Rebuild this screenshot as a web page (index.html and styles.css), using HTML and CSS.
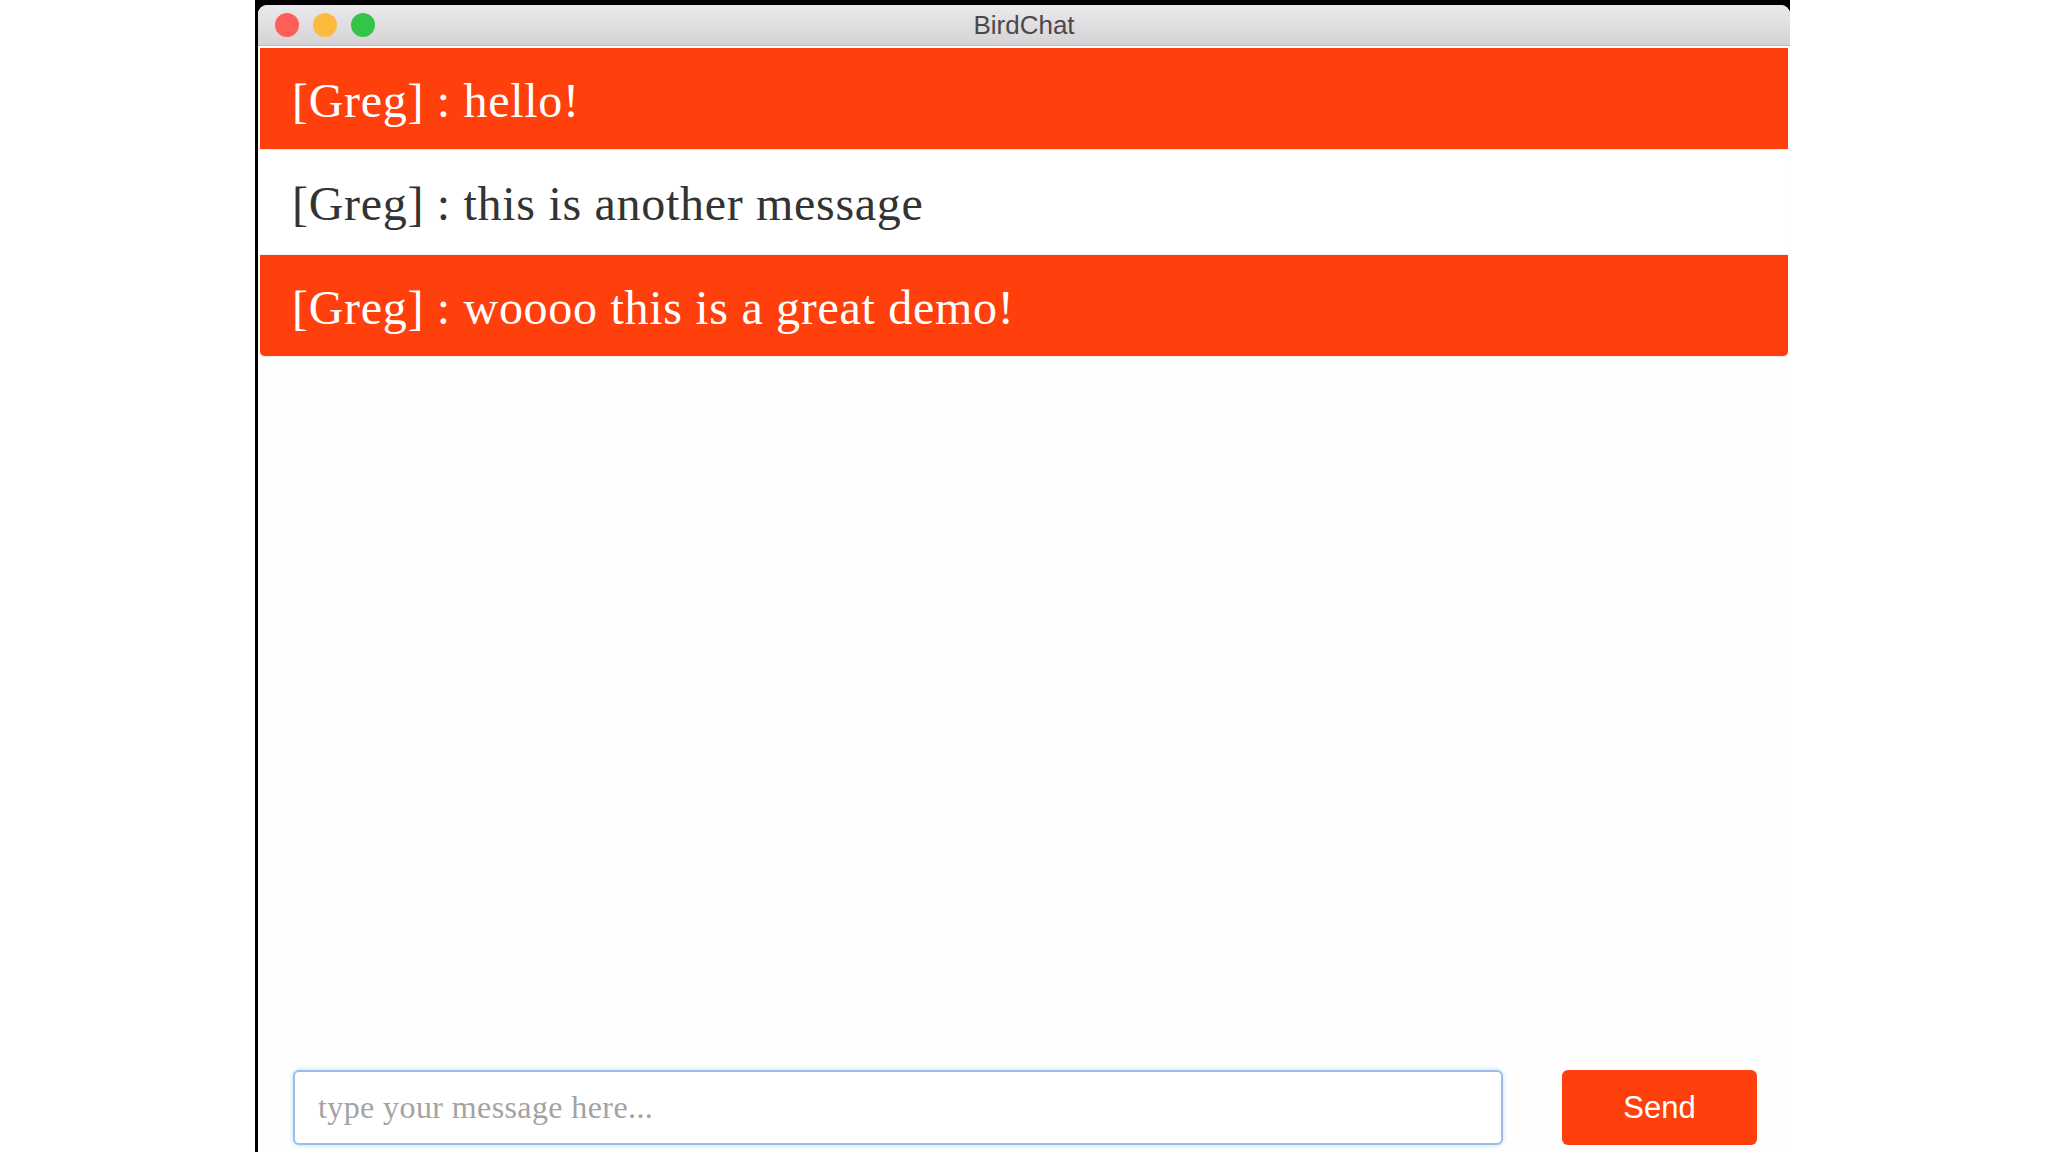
FILE: index.html
```html
<!DOCTYPE html>
<html lang="en">
  <head>
    <meta charset="UTF-8" />
    <meta name="viewport" content="width=device-width, initial-scale=1.0" />
    <title>BirdChat</title>
    <link rel="stylesheet" href="styles.css">
  </head>
  <body>
    <div class="screen">
      <div class="window">
        <div class="title-bar">
          <div class="lights">
            <span class="light light-close"></span>
            <span class="light light-min"></span>
            <span class="light light-max"></span>
          </div>
          <div class="title">BirdChat</div>
        </div>

        <div id="messages" class="messages">
          <div class="message odd">[Greg] : hello!</div>
          <div class="message even">[Greg] : this is another message</div>
          <div class="message odd last">[Greg] : woooo this is a great demo!</div>
        </div>

        <div class="composer">
          <input id="messageText" type="text" placeholder="type your message here..." />
          <button id="sendBtn">Send</button>
        </div>
      </div>
    </div>
  </body>
</html>
```

FILE: styles.css
```css
body {
  margin: 0;
  background-color: #ffffff;
  font-family: "Liberation Serif", serif;
}

.screen {
  margin-left: 255px;
  width: 1535px;
  height: 1152px;
  padding: 5px 0 0 3px;
  box-sizing: border-box;
  background-color: #000;
  overflow: hidden;
}

.window {
  height: 100%;
  background-color: #fefefe;
  border-radius: 9px 9px 0 0;
  display: flex;
  flex-direction: column;
  overflow: hidden;
}

.title-bar {
  position: relative;
  height: 40px;
  flex-shrink: 0;
  background: linear-gradient(#ebe9eb, #d5d3d5);
  border-bottom: 1px solid #bcbabc;
  display: flex;
  align-items: center;
  justify-content: center;
}

.lights {
  position: absolute;
  left: 17px;
  top: 8px;
  display: flex;
  gap: 14px;
}

.light {
  width: 24px;
  height: 24px;
  border-radius: 50%;
}

.light-close {
  background-color: #fc5f5a;
}

.light-min {
  background-color: #fdbb3e;
}

.light-max {
  background-color: #32c549;
}

.title {
  font-family: "Liberation Sans", Arial, sans-serif;
  font-size: 26px;
  color: #4a4a4a;
}

.messages {
  flex: 1;
  padding: 2px 2px 0 2px;
}

.message {
  height: 102px;
  box-sizing: border-box;
  padding: 4px 0 0 32px;
  line-height: 97px;
  font-size: 48px;
  letter-spacing: 0.7px;
  color: #333333;
  background-color: #ffffff;
  border-bottom: 1px solid #f6ebe7;
}

.message.even {
  height: 105px;
  padding-top: 5px;
}

.message.odd {
  background-color: #ff3f0c;
  color: #ffffff;
}

.message.last {
  border-radius: 0 0 5px 5px;
}

.composer {
  display: flex;
  gap: 59px;
  padding: 0 33px 7px 35px;
}

.composer input {
  flex: 1;
  height: 75px;
  box-sizing: border-box;
  padding: 0 23px;
  border: 2px solid #9dbde6;
  border-radius: 6px;
  box-shadow: 0 0 5px #b8dcf7;
  background-color: #fff;
  font-family: "Liberation Serif", serif;
  font-size: 32px;
  letter-spacing: 0.4px;
  color: #333;
  outline: none;
}

.composer input::placeholder {
  color: #a3a3a3;
}

.composer button {
  width: 195px;
  height: 75px;
  border: none;
  border-radius: 6px;
  background-color: #ff3f0c;
  color: #fff;
  font-family: "Liberation Sans", Arial, sans-serif;
  font-size: 31px;
  cursor: pointer;
}
```
